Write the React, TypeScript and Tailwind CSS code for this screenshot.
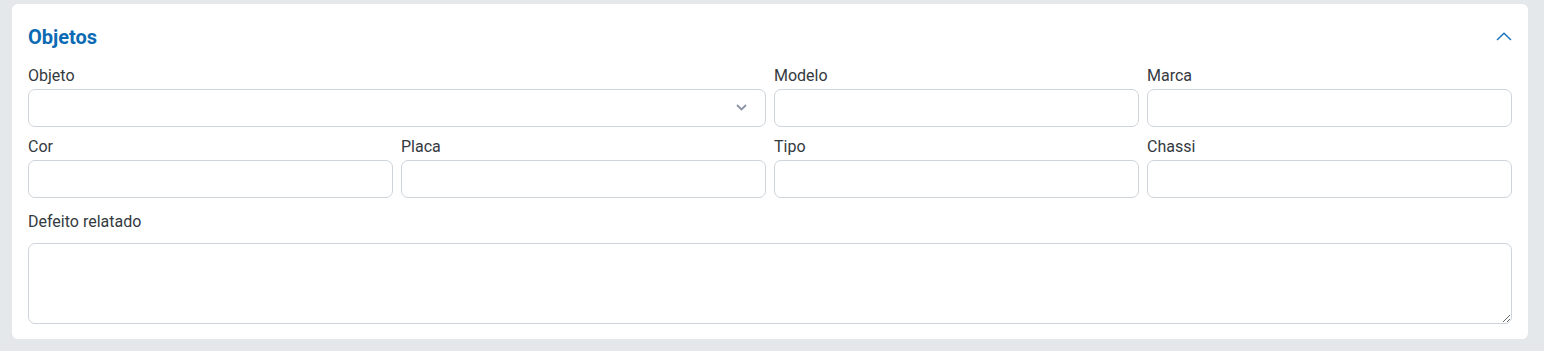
import { useState } from "react";

const fieldClass =
  "block w-full h-[38px] rounded-[7px] border border-[#ced4da] bg-white px-3 text-[15px] text-[#343a40] outline-none";

function Field({ label, children }: { label: string; children?: React.ReactNode }) {
  return (
    <div className="flex flex-col">
      <label className="mb-[1px] text-[16px] leading-6 text-[#343a40]">{label}</label>
      {children ?? <input type="text" className={fieldClass} />}
    </div>
  );
}

export default function App() {
  const [open, setOpen] = useState(true);

  return (
    <div className="min-h-[351px] bg-[#e5e8ea] pl-[12px] pr-[16px] pt-[4px] pb-[12px] font-['Roboto',sans-serif]">
      <section className="rounded-[6px] bg-white px-4 pt-[19px] pb-[15px]">
        <div className="flex h-7 items-center justify-between">
          <h2 className="text-[20px] font-bold leading-7 text-[#0b6ab4]">Objetos</h2>
          <button type="button" onClick={() => setOpen(!open)} className="mt-[-2px] text-[#1c74c0]">
            <svg width="16" height="9" viewBox="0 0 16 9" fill="none">
              <polyline points="1,8 8,1.2 15,8" stroke="currentColor" strokeWidth="1.5" />
            </svg>
          </button>
        </div>

        <div className="mt-[13px] grid grid-cols-4 gap-x-2 gap-y-2">
          <div className="col-span-2">
            <Field label="Objeto">
              <div className="relative">
                <select className={fieldClass + " appearance-none"} defaultValue="">
                  <option value=""></option>
                </select>
                <svg
                  className="pointer-events-none absolute right-[19px] top-[15px]"
                  width="11"
                  height="7"
                  viewBox="0 0 11 7"
                  fill="none"
                >
                  <polyline points="1,1 5.5,5.5 10,1" stroke="#8c93a5" strokeWidth="1.8" />
                </svg>
              </div>
            </Field>
          </div>
          <Field label="Modelo" />
          <Field label="Marca" />
          <Field label="Cor" />
          <Field label="Placa" />
          <Field label="Tipo" />
          <Field label="Chassi" />
        </div>

        <div className="mt-[12px] flex flex-col">
          <label className="mb-[9px] text-[16px] leading-6 text-[#343a40]">Defeito relatado</label>
          <textarea className="block h-[81px] w-full rounded-[7px] border border-[#ced4da] bg-white px-3 py-2 text-[15px] text-[#343a40] outline-none" />
        </div>
      </section>
    </div>
  );
}
